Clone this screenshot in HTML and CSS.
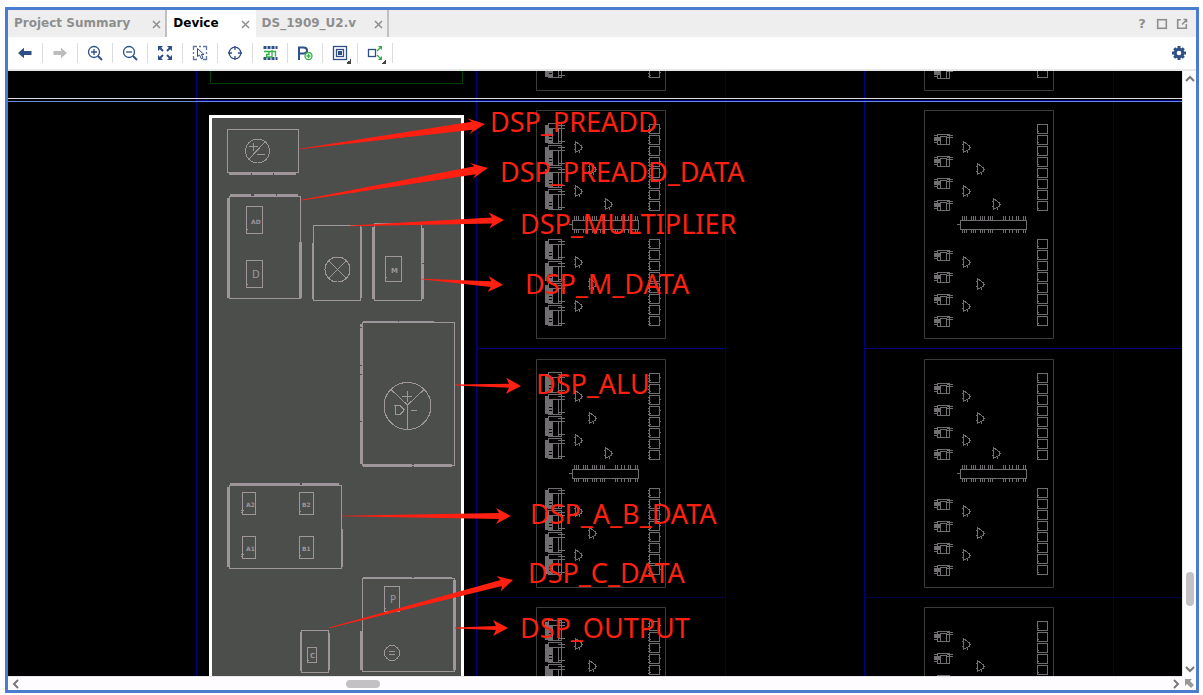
FILE: index.html
```html
<!DOCTYPE html>
<html lang="en">
<head>
<meta charset="utf-8">
<title>Device</title>
<link rel="stylesheet" href="styles.css">
</head>
<body>
<main class="window">
  <header class="tabs">
    <div class="tab"><button class="tab-name">Project Summary</button><button class="close" aria-label="Close Project Summary"><svg width="9" height="9"><path d="M1 1 8 8M8 1 1 8"/></svg></button></div>
    <div class="tab active"><button class="tab-name">Device</button><button class="close" aria-label="Close Device"><svg width="9" height="9"><path d="M1 1 8 8M8 1 1 8"/></svg></button></div>
    <div class="tab"><button class="tab-name">DS_1909_U2.v</button><button class="close" aria-label="Close DS_1909_U2.v"><svg width="9" height="9"><path d="M1 1 8 8M8 1 1 8"/></svg></button></div>
    <div class="window-tools">
      <button class="help" aria-label="Help">?</button>
      <button aria-label="Maximize"><svg width="12" height="12"><rect x="1.7" y="1.7" width="8.6" height="8.6"/></svg></button>
      <button aria-label="Float"><svg width="12" height="12"><path d="M5 1.7H1.7V10.3H10.3V6M6 6.500 10.500 2M7.500 1.500H10.500V4.500"/></svg></button>
    </div>
  </header>
  <nav class="toolbar" aria-label="Device tools">
    <button aria-label="Back"><svg viewBox="0 0 20 20"><path class="solid" d="M3 10 9 4.8V8h7.500v4H9v3.200z"/></svg></button>
    <button aria-label="Forward"><svg viewBox="0 0 20 20"><path class="muted" d="M17 10 11 4.800V8H3.500v4H11v3.200z"/></svg></button>
    <button aria-label="Zoom in"><svg viewBox="0 0 20 20"><circle cx="9" cy="9" r="5.500"/><path d="M6 9h6M9 6v6"/><path class="thick" d="m13 13 4 4"/></svg></button>
    <button aria-label="Zoom out"><svg viewBox="0 0 20 20"><circle cx="9" cy="9" r="5.500"/><path d="M6 9h6"/><path class="thick" d="m13 13 4 4"/></svg></button>
    <button aria-label="Zoom fit"><svg viewBox="0 0 20 20"><path class="solid" d="M3 3h5L3 8zM17 3v5l-5-5zM3 17v-5l5 5zM17 17h-5l5-5z"/><path class="thick" d="m4 4 4 4m8-4-4 4m-8 8 4-4m8 4-4-4"/></svg></button>
    <button aria-label="Select area"><svg viewBox="0 0 20 20"><path class="pale" d="M3.500 7V3.500H7M9 3.500h2M13 3.500h3.500V7M16.500 9v2M16.500 13v3.500H13M7 16.500H3.500V13M3.500 11V9"/><path class="fine" d="M7.500 5.500v8l2-1.500 2 4 1.500-1-1.500-3.500h2.500z"/></svg></button>
    <button aria-label="Autofit selection"><svg viewBox="0 0 20 20"><circle cx="10" cy="10" r="5.800"/><path d="M10 3v4M10 13v4M3 10h4M13 10h4"/></svg></button>
    <button aria-label="Routing resources"><svg viewBox="0 0 20 20"><path class="dots" d="M3.500 4.500h14M3.500 15.500h14"/><path class="green" d="M4 8.500h5v3H6M12 7v7h-5.500v-2.500M9 8.500h6.500v5"/></svg></button>
    <button aria-label="Add Pblock"><svg viewBox="0 0 20 20"><path class="thick" d="M4 17V4.500h4.500q3.500 0 3.500 3t-3.500 3H4"/><circle class="plus-disc" cx="13.500" cy="13" r="3.500"/><path class="green" d="M11.500 13h4M13.500 11v4"/></svg></button>
    <button aria-label="Cell drawing options"><svg viewBox="0 0 20 20"><rect x="3.500" y="3.500" width="13" height="13"/><rect x="6.500" y="6.500" width="7" height="7"/><path class="solid" d="M8 8h4v4H8z"/></svg><i></i></button>
    <button aria-label="Show connections"><svg viewBox="0 0 20 20"><rect x="3.500" y="6.500" width="7" height="7"/><path class="green" d="m12 8 4-4M12 12l4 4"/><path class="green-fill" d="M13 3h4v4zM17 13v4h-4z"/></svg><i></i></button>
    <button class="settings" aria-label="Settings"><svg viewBox="0 0 20 20"><path class="gear" d="M10 3v3M10 14v3M3 10h3M14 10h3M5.200 5.200 7 7M13 13l1.800 1.800M14.800 5.200 13 7M7 13l-1.800 1.800"/><circle class="gear" cx="10" cy="10" r="3.800"/></svg></button>
  </nav>
  <section class="view">
    <svg class="device" viewBox="8 71 1174 605" preserveAspectRatio="xMinYMin slice" role="img" aria-label="Device view of a DSP site">
      <defs>
        <path id="lut-wide" class="cell" d="M3.500 .5h13v20h-13zM7.500 5.500h6v15h-6zM13 2.500h7M13 5.500h7M13 18.500h7"/>
        <path id="lut-fill" class="cell-fill" d="M0 2h4v3h3v8H4v1h3v2H4v1h3v3H0z"/>
        <g id="lw"><use href="#lut-wide"/><use href="#lut-fill"/></g>
        <g id="ls"><path class="cell" d="M3.500 .5h12v10h-12zM6.500 2.500h6v8h-6zM0 1.500h4M0 8.500h4M13 1.500h6M13 3.500h6"/><path class="cell-fill" d="M0 3h6v4H0z"/></g>
        <path id="mux" class="cell" d="M1.500 0v12M0 3.500h1M0 8.500h1M1 1.500h2l4 3v4l-4 2H1M8 6.500h1M5.500 10v2"/>
        <path id="ff" class="cell" d="M.5 .5h10v9H.5zM1 7.500h1"/>
        <g id="ff4"><use href="#ff"/><use href="#ff" y="11"/><use href="#ff" y="22"/><use href="#ff" y="33"/></g>
        <g id="ff8"><use href="#ff4"/><use href="#ff4" y="44"/></g>
        <path id="ff-pins" class="cell" d="M-1 2.500h1M-1 5.500h1M-1 8.500h1M11 4.500h1M-1 13.500h1M-1 16.500h1M-1 19.500h1M11 15.500h1M-1 24.500h1M-1 27.500h1M-1 30.500h1M11 26.500h1M-1 35.500h1M-1 38.500h1M-1 41.500h1M11 37.500h1"/>
        <g id="slice-core">
          <path class="slice" d="M.5 .5h129v228H.5z"/>
          <use href="#mux" x="38" y="31"/><use href="#mux" x="52" y="53"/><use href="#mux" x="38" y="75"/><use href="#mux" x="68" y="88"/>
          <use href="#mux" x="38" y="146"/><use href="#mux" x="52" y="168"/><use href="#mux" x="38" y="190"/>
          <path class="cell" d="M36.500 110.500h66v9h-66zM33 114.500h3M38.500 106v4M40.500 106v4M42.500 106v4M47.500 106v4M49.500 106v4M51.500 106v4M56.500 106v4M58.500 106v4M60.500 106v4M64.500 106v4M66.500 106v4M68.500 106v4M79.500 106v4M81.500 106v4M85.500 106v4M88.500 106v4M92.500 106v4M94.500 106v4M99.500 106v4M101.500 106v4"/>
          <path class="cell" d="M38.500 120v3M40.500 120v3M42.500 120v3M47.500 120v3M49.500 120v3M51.500 120v3M56.500 120v3M58.500 120v3M60.500 120v3M64.500 120v3M66.500 120v3M68.500 120v3M79.500 120v3M81.500 120v3M85.500 120v3M88.500 120v3M92.500 120v3M94.500 120v3M99.500 120v3M101.500 120v3"/>
          <use href="#ff8" x="113" y="14"/><use href="#ff8" x="113" y="129"/>
        </g>
        <g id="slice-m">
          <use href="#slice-core"/>
          <use href="#lw" x="9" y="13"/><use href="#lw" x="9" y="35"/><use href="#lw" x="9" y="57"/><use href="#lw" x="9" y="79"/>
          <use href="#lw" x="9" y="129"/><use href="#lw" x="9" y="151"/><use href="#lw" x="9" y="173"/><use href="#lw" x="9" y="195"/>
          <use href="#ff-pins" x="113" y="14"/><use href="#ff-pins" x="113" y="58"/><use href="#ff-pins" x="113" y="129"/><use href="#ff-pins" x="113" y="173"/>
        </g>
        <g id="slice-l">
          <use href="#slice-core"/>
          <use href="#ls" x="10" y="24"/><use href="#ls" x="10" y="46"/><use href="#ls" x="10" y="68"/><use href="#ls" x="10" y="90"/>
          <use href="#ls" x="10" y="140"/><use href="#ls" x="10" y="162"/><use href="#ls" x="10" y="184"/><use href="#ls" x="10" y="206"/>
        </g>
      </defs>

      <path class="tile" d="M196.500 71v605M476.500 71v605M864.500 71v605M476 348.500h250M864 348.500h318"/>
      <path class="tile dim" d="M725.500 71v605M1113.500 71v605M476 597.500h250M864 597.500h318"/>
      <path class="clock-region" d="M210.500 71v12.500h252V71"/>
      <use href="#slice-m" x="536" y="-138"/><use href="#slice-m" x="536" y="110"/><use href="#slice-m" x="536" y="359"/><use href="#slice-m" x="536" y="607"/>
      <use href="#slice-l" x="924" y="-138"/><use href="#slice-l" x="924" y="110"/><use href="#slice-l" x="924" y="359"/><use href="#slice-l" x="924" y="607"/>
      <path class="tile" d="M196 100.500h986"/>
      <path class="divider" d="M8 98.500h1174"/>
      <path class="divider blue" d="M8 101.500h1174"/>

      <rect class="dsp" x="210.500" y="116.500" width="252" height="580"/>
      <g class="block">
        <path d="M227.500 129.500h71v43h-71zM229.500 196.500h71v102h-71zM313.500 225.500h47v75h-47zM374.500 223.500h47v77h-47zM362.500 322.500h92v143h-92zM229.500 485.500h112v83h-112zM362.500 578.500h92v93h-92zM301.500 630.500h27v42h-27z"/>
        <path d="M246.500 206.500h16v27h-16zM246.500 260.500h16v27h-16zM385.500 256.500h16v25h-16zM242.500 492.500h13v22h-13zM299.500 492.500h14v22h-14zM242.500 536.500h13v22h-13zM299.500 536.500h14v22h-14zM384.500 586.500h15v25h-15zM307.500 647.500h9v15h-9z"/>
        <path d="M247 229.500h1M247 284.500h1M386 277.500h1M241 510.500h3M241 512.500h2M300 511.500h1M241 554.500h3M241 556.500h2M300 555.500h1M385 608.500h1M308 660.500h1"/>
        <circle cx="257.500" cy="151" r="12"/><path d="M249 159 265 142M253.500 143v8M249 146.500h9M257 154.500h8"/>
        <circle cx="337.500" cy="269.500" r="12.500"/><path d="m329 261 17 17M346 261l-17 17"/>
        <circle cx="407.500" cy="406" r="23.500"/><path d="M407.500 429v-24L391 389.500M407.500 405 424 389.500M407.500 391v11M402 396.500h10M411 410.500h6M394 405.500h6l3 3v3l-3 3h-5v-9M403 409.500h2"/>
        <circle cx="392" cy="653" r="7.500"/><path d="M389 651.500h6M389 654.500h6"/>
      </g>
      <path class="pins" d="M229 173h22v2h-22zM252 173h21v2h-21zM274 173h22v2h-22zM230 194h21v2h-21zM254 194h22v2h-22zM277 194h21v2h-21zM227 198h3v100h-3zM299 242h3v56h-3zM312 243h2v56h-2zM360 227h2v71h-2zM372 227h3v72h-3zM422 228h2v35h-2zM422 264h2v35h-2zM363 321h35v2h-35zM399 321h35v2h-35zM360 324h3v3h-3zM360 328h3v37h-3zM360 366h3v8h-3zM360 375h3v46h-3zM360 422h3v42h-3zM363 464h49v3h-49zM414 464h38v3h-38zM230 483h70v3h-70zM302 483h37v3h-37zM227 487h3v80h-3zM341 529h2v38h-2zM363 577h49v2h-49zM414 577h38v2h-38zM453 580h3v90h-3zM360 631h3v39h-3zM300 632h2v39h-2zM328 633h2v37h-2z"/>
      <g class="labels">
        <text x="252" y="278" class="large">D</text><text x="391" y="273">M</text><text x="390" y="603" class="large">P</text><text x="310" y="658">C</text>
        <text x="251" y="224" class="tiny">AD</text><text x="246" y="507" class="tiny">A2</text><text x="302" y="507" class="tiny">B2</text><text x="246" y="551" class="tiny">A1</text><text x="302" y="551" class="tiny">B1</text>
      </g>
      <g class="arrows">
        <path transform="translate(485 124) rotate(-7.700)" d="M0 0-17-8-13-4-187-.3v.6L-13 4-17 8z"/>
        <path transform="translate(488 168) rotate(-9.800)" d="M0 0-17-8-13-4-189-.3v.6L-13 4-17 8z"/>
        <path transform="translate(504 220) rotate(-2.200)" d="M0 0-15-8-12-3-154-.3v.6L-12 3-15 8z"/>
        <path transform="translate(503 285) rotate(4.200)" d="M0 0-15-8-12-3-82-.3v.6L-12 3-15 8z"/>
        <path transform="translate(521 386) rotate(.9)" d="M0 0-15-8-12-2-66-.5v1L-12 2-15 8z"/>
        <path transform="translate(511 516)" d="M0 0-15-8-12-3-169-.3v.6L-12 3-15 8z"/>
        <path transform="translate(513 580) rotate(-14.600)" d="M0 0-15-8-12-3-190-.3v.6L-12 3-15 8z"/>
        <path transform="translate(508 628)" d="M0 0-15-8-12-2-53-.5v1L-12 2-15 8z"/>
      </g>
      <g class="notes">
        <text x="490" y="132">DSP_PREADD</text>
        <text x="500" y="182">DSP_PREADD_DATA</text>
        <text x="520" y="234">DSP_MULTIPLIER</text>
        <text x="525" y="294">DSP_M_DATA</text>
        <text x="536" y="394">DSP_ALU</text>
        <text x="530" y="524">DSP_A_B_DATA</text>
        <text x="528" y="583">DSP_C_DATA</text>
        <text x="520" y="638">DSP_OUTPUT</text>
      </g>
    </svg>
    <div class="scroll vertical">
      <button aria-label="Scroll up"><svg width="12" height="8"><path d="m2 6 4-4 4 4"/></svg></button>
      <span class="before"></span><span class="thumb"></span><span class="after"></span>
      <button aria-label="Scroll down"><svg width="12" height="8"><path d="m2 2 4 4 4-4"/></svg></button>
    </div>
    <div class="scroll horizontal">
      <button aria-label="Scroll left"><svg width="8" height="12"><path d="M6 2 2 6l4 4"/></svg></button>
      <span class="before"></span><span class="thumb"></span><span class="after"></span>
      <button aria-label="Scroll right"><svg width="8" height="12"><path d="m2 2 4 4-4 4"/></svg></button>
    </div>
    <button class="corner" aria-label="World view"><svg width="12" height="12"><path d="M2 2h7L7 4l4 4-3 3-4-4-2 2z"/></svg></button>
  </section>
</main>
</body>
</html>
```
FILE: styles.css
```css
* { box-sizing: border-box; }
body {
  margin: 0;
  height: 100vh;
  padding: 7px 4px 2px 5px;
  background: #fff;
  font-family: "DejaVu Sans", sans-serif;
}
button {
  margin: 0;
  padding: 0;
  border: 0;
  background: none;
  font: inherit;
  color: inherit;
  display: flex;
  align-items: center;
  justify-content: center;
}
.window {
  height: 100%;
  border: 3px solid #4a7ccf;
  display: flex;
  flex-direction: column;
}
.tabs {
  display: flex;
  height: 27px;
  flex: none;
  background: #eee;
  font-size: 12px;
  font-weight: bold;
  color: #8e8e8e;
}
.tab {
  display: flex;
  align-items: center;
  gap: 22px;
  padding: 0 4px 2px 6px;
  border-right: 2px solid #c0c0c0;
}
.tab:nth-child(3) { gap: 18px; }
.tab.active { background: #fff; color: #000; border: 0; padding-right: 6px; }
.close { padding-top: 4px; }
.close svg { fill: none; stroke: #8e8e8e; stroke-width: 1.5; }
.window-tools {
  margin-left: auto;
  display: flex;
  gap: 8px;
  padding-right: 8px;
}
.window-tools svg { fill: none; stroke: #8e8e8e; stroke-width: 1.6; }
.help { width: 12px; font-size: 13px; }
.toolbar {
  display: flex;
  align-items: center;
  height: 34px;
  flex: none;
  border-bottom: 2px solid #e8e8e8;
  background: #fff;
}
.toolbar button {
  position: relative;
  width: 35px;
  height: 20px;
  border-right: 1px solid #dcdcdc;
}
.toolbar .settings { margin-left: auto; border: 0; }
.toolbar svg {
  width: 20px;
  height: 20px;
  fill: none;
  stroke: #2f4f86;
  stroke-width: 1.3;
}
.toolbar .solid { fill: #2f4f86; stroke: none; }
.toolbar .muted { fill: #bcbcbc; stroke: none; }
.toolbar .thick { stroke-width: 2; }
.toolbar .fine { stroke-width: 1; }
.toolbar .pale { stroke: #6078a0; }
.toolbar .dots { stroke-width: 3; stroke-dasharray: 3 1; }
.toolbar .green { stroke: #32b044; }
.toolbar .green-fill { fill: #32b044; stroke: none; }
.toolbar .plus-disc { fill: #fff; stroke: #32b044; }
.toolbar .gear { stroke-width: 3; }
.toolbar i {
  position: absolute;
  right: 6px;
  bottom: -1px;
  width: 5px;
  height: 5px;
  background: linear-gradient(135deg, transparent 50%, #444 50%);
}
.view {
  flex: 1;
  min-height: 0;
  display: grid;
  grid-template-columns: minmax(0, 1fr) 14px;
  grid-template-rows: minmax(0, 1fr) 14px;
  background: #fffcff;
}
.device { width: 100%; height: 100%; background: #000; display: block; }
.tile { fill: none; stroke: #000080; }
.tile.dim { stroke: #00004c; }
.clock-region { fill: none; stroke: #004000; }
.divider { stroke: #dcdcdc; }
.divider.blue { stroke: #688ce0; }
.slice { fill: none; stroke: #3a3c3a; }
.cell { fill: none; stroke: #706e70; shape-rendering: crispEdges; }
.cell-fill { fill: #706e70; }
.dsp { fill: #4c4e4b; stroke: #fff; stroke-width: 3; }
.block { fill: none; stroke: #9f969c; shape-rendering: crispEdges; }
.pins, .labels { fill: #9f969c; }
.labels { font-family: "DejaVu Sans", sans-serif; font-size: 7px; font-weight: bold; }
.labels .large { font-size: 10px; font-weight: normal; }
.labels .tiny { font-size: 6px; }
.arrows { fill: #ff2012; }
.notes { fill: #ff2012; font-family: "Noto Sans", sans-serif; font-size: 27px; }
.scroll { display: flex; align-items: center; background: #fffcff; }
.scroll svg { fill: none; stroke: #777; stroke-width: 2; }
.vertical { flex-direction: column; border-left: 1px solid #e8e8e8; padding: 4px 0 3px; }
.horizontal { border-top: 1px solid #e8e8e8; padding: 0 2px 0 4px; }
.thumb { border-radius: 4px; background: #c4c1c5; }
.vertical .thumb { width: 8px; height: 34px; }
.horizontal .thumb { width: 34px; height: 8px; }
.vertical .before { flex: 490; }
.vertical .after { flex: 59; }
.horizontal .before { flex: 326; }
.horizontal .after { flex: 792; }
.corner svg { fill: #999; }
```
